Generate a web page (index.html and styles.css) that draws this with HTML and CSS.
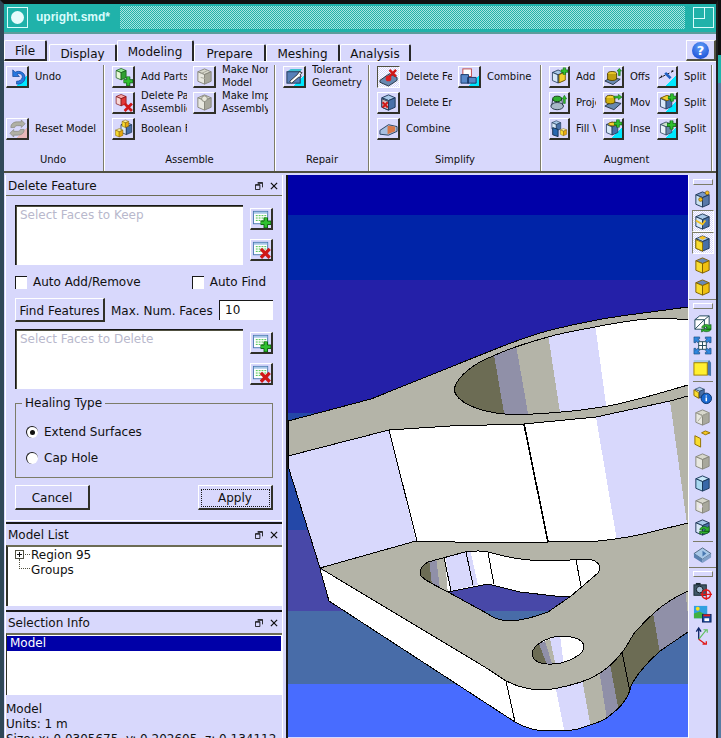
FILE: index.html
```html
<!DOCTYPE html>
<html lang="en">
<head>
  <meta charset="UTF-8" />
  <title>upright.smd*</title>
  <link rel="stylesheet" href="styles.css">
</head>
<body>

<!-- shared icon parts -->
<svg class="defs" width="0" height="0" aria-hidden="true">
  <symbol id="cube" viewBox="0 0 20 20">
    <g stroke="var(--s, #203858)" stroke-linejoin="round">
      <polygon points="10,2 17,5 10,8 3,5" fill="var(--t, #a8c8e8)"/>
      <polygon points="3,5 10,8 10,18 3,15" fill="var(--l, #d8e8f8)"/>
      <polygon points="17,5 10,8 10,18 17,15" fill="var(--r, #4870a8)"/>
    </g>
  </symbol>
  <symbol id="plus" viewBox="0 0 9 9">
    <path d="M3 0h3v3h3v3H6v3H3V6H0V3h3z" fill="#30c030" stroke="#086008" stroke-width=".8"/>
  </symbol>
  <symbol id="cross" viewBox="0 0 9 9">
    <path d="M1 1l7 7M8 1L1 8" stroke="#d01818" stroke-width="2.6"/>
  </symbol>
  <symbol id="sheet" viewBox="0 0 20 20">
    <rect x="1.5" y="2.5" width="15" height="13" fill="#fff" stroke="#4878b0"/>
    <rect x="2" y="3" width="14" height="2" fill="#a8c8e8"/>
    <path d="M4 7h11M4 9.500h11M4 12h11" stroke="#40c040" stroke-dasharray="2 1"/>
  </symbol>
</svg>

<div class="app">
  <div class="titlebar">
    <div class="title-icon"><span></span></div>
    <div class="title-text">upright.smd*</div>
    <div class="title-fill"></div>
    <div class="title-max"><span></span></div>
  </div>

  <div class="tabs">
    <div class="tab tab-file">File</div>
    <div class="tab tab-display">Display</div>
    <div class="tab tab-active">Modeling</div>
    <div class="tab tab-prepare">Prepare</div>
    <div class="tab tab-meshing">Meshing</div>
    <div class="tab tab-analysis">Analysis</div>
    <div class="help"><span>?</span></div>
  </div>

  <div class="ribbon">
    <div class="group group-undo">
      <div class="tools">
        <div class="tool">
          <div class="btn corner"><svg class="ic" viewBox="0 0 20 20"><path d="M5 3v7h7L9.500 7.500c3-1.500 6 .5 5.500 3.500-.5 2.500-3 4-6 4v3c5 .5 9-2.500 9-7 0-5-6-8-10.500-5.500z" fill="#2878e0" stroke="#0c3c90" stroke-width=".7"/></svg></div>
          <div class="label lw-undo">Undo</div>
        </div>
        <div class="tool row3">
          <div class="btn corner-pink"><svg class="ic" viewBox="0 0 20 20"><path d="M3 9c0-4 3-6 7-6h4V1l4 4-4 4V7h-4c-2 0-3 1-3 2zM17 11c0 4-3 6-7 6H6v2l-4-4 4-4v2h4c2 0 3-1 3-2z" fill="#b0b0a4" stroke="#84847c" stroke-width=".7"/></svg></div>
          <div class="label lw-reset">Reset Model</div>
        </div>
      </div>
      <div class="group-name">Undo</div>
    </div>

    <div class="group group-assemble">
      <div class="tools">
        <div class="tool">
          <div class="btn"><svg class="ic" viewBox="0 0 20 20"><use href="#cube" class="c-green" width="15" height="15" x="0" y="0"/><use href="#plus" x="10" y="10" width="10" height="10"/></svg></div>
          <div class="label lw-46">Add Parts</div>
        </div>
        <div class="tool">
          <div class="btn"><svg class="ic" viewBox="0 0 20 20"><use href="#cube" class="c-grey" width="20" height="20"/><path d="M6 7l7-3M6 11l8 2" stroke="#a8a89c"/></svg></div>
          <div class="label lw-46">Make Nor<br>Model</div>
        </div>
        <div class="tool">
          <div class="btn"><svg class="ic" viewBox="0 0 20 20"><use href="#cube" class="c-red" width="15" height="15" x="0" y="0"/><use href="#cross" x="10" y="10" width="10" height="10"/></svg></div>
          <div class="label lw-46">Delete Pa<br>Assemblie</div>
        </div>
        <div class="tool">
          <div class="btn"><svg class="ic" viewBox="0 0 20 20"><use href="#cube" class="c-grey" width="20" height="20"/><circle cx="10" cy="6" r="3" fill="#e8e8dc" stroke="#88887c"/></svg></div>
          <div class="label lw-46">Make Imp<br>Assembly</div>
        </div>
        <div class="tool">
          <div class="btn"><svg class="ic" viewBox="0 0 20 20"><use href="#cube" width="16" height="18" x="5" y="1"/><use href="#cube" class="c-yellow" width="10" height="10" x="7" y="0"/><use href="#cube" class="c-yellow" width="11" height="11" x="0" y="9"/></svg></div>
          <div class="label lw-46">Boolean F</div>
        </div>
      </div>
      <div class="group-name">Assemble</div>
    </div>

    <div class="group group-repair">
      <div class="tools">
        <div class="tool">
          <div class="btn corner"><svg class="ic" viewBox="0 0 20 20"><path d="M2 5l4-3h12l-2 3z" fill="#40c0d0"/><rect x="2" y="5" width="14" height="12" fill="#5880b8" stroke="#203858"/><path d="M5 15l8-7 2-3 3 1-2 2 1 2-3 1-7 6z" fill="#fff" stroke="#101010" stroke-width=".8"/></svg></div>
          <div class="label lw-repair">Tolerant<br>Geometry</div>
        </div>
      </div>
      <div class="group-name">Repair</div>
    </div>

    <div class="group group-simplify">
      <div class="tools">
        <div class="tool">
          <div class="btn pressed"><svg class="ic" viewBox="0 0 20 20"><path d="M1 13l10-7 8 4v3l-9 6-9-4z" fill="#6888b0" stroke="#203040"/><circle cx="10" cy="11" r="3" fill="#e02020"/><use href="#cross" x="10" y="1" width="9" height="9"/></svg></div>
          <div class="label lw-46">Delete Fe</div>
        </div>
        <div class="tool">
          <div class="btn corner"><svg class="ic" viewBox="0 0 20 20"><rect x="3" y="2" width="9" height="8" fill="#fff" stroke="#c04848"/><path d="M1 8h8v9H1zM8 11h9v6H8z" fill="#5888c8" stroke="#183868"/></svg></div>
          <div class="label lw-46">Combine</div>
        </div>
        <div class="tool">
          <div class="btn"><svg class="ic" viewBox="0 0 20 20"><use href="#cube" width="20" height="20"/><polygon points="3,6 10,9 10,18 3,15" fill="#d8b8b8" stroke="#203858"/><use href="#cross" x="3" y="9" width="7" height="7"/></svg></div>
          <div class="label lw-46">Delete Er</div>
        </div>
        <div class="tool empty"></div>
        <div class="tool">
          <div class="btn"><svg class="ic" viewBox="0 0 20 20"><path d="M1 12l9-6 9 2v5l-9 4-9-1z" fill="#a8c0e0" stroke="#284060"/><path d="M9 7l8 1v5l-8 3z" fill="#d87848"/></svg></div>
          <div class="label lw-46">Combine</div>
        </div>
      </div>
      <div class="group-name">Simplify</div>
    </div>

    <div class="group group-augment">
      <div class="tools">
        <div class="tool">
          <div class="btn"><svg class="ic" viewBox="0 0 20 20"><use href="#cube" width="18" height="20" y="0"/><polygon points="10,8 17,5 17,14 10,17" fill="#f0d030" stroke="#806000"/><use href="#plus" x="12" y="0" width="8" height="8"/></svg></div>
          <div class="label lw-20">Add</div>
        </div>
        <div class="tool">
          <div class="btn"><svg class="ic" viewBox="0 0 20 20"><path d="M1 15l7-4 10 2-8 6z" fill="#6888b0" stroke="#203040"/><ellipse cx="9" cy="7" rx="5" ry="2.500" fill="#f0d030" stroke="#504000"/><path d="M4 7v6c2 2 8 2 10 0V7" fill="#c0a010" stroke="#504000"/><path d="M16 9V4h-1.500l2.500-3 2.500 3H18v5z" fill="#30c030" stroke="#086008" stroke-width=".6"/></svg></div>
          <div class="label lw-20">Offs</div>
        </div>
        <div class="tool">
          <div class="btn corner"><svg class="ic" viewBox="0 0 20 20"><path d="M1 12L19 3" stroke="#101010" stroke-dasharray="3 2"/><circle cx="4" cy="10" r="1" fill="#101010"/><circle cx="16" cy="4" r="1" fill="#101010"/><path d="M8 6l6 6" stroke="#2060c0" stroke-width="3"/></svg></div>
          <div class="label lw-22">Split</div>
        </div>
        <div class="tool">
          <div class="btn"><svg class="ic" viewBox="0 0 20 20"><ellipse cx="8" cy="14" rx="7" ry="4" fill="#a8b8c8" stroke="#203040"/><ellipse cx="8" cy="6" rx="5" ry="3" fill="#30b030" stroke="#083808"/><path d="M3 6l-1 7M13 6l1 7" stroke="#203040"/><path d="M15 11V6h-1.500L16 2l2.500 4H17v5z" fill="#30c030" stroke="#086008" stroke-width=".6"/></svg></div>
          <div class="label lw-20">Proje</div>
        </div>
        <div class="tool">
          <div class="btn"><svg class="ic" viewBox="0 0 20 20"><path d="M1 14l8-5 10 2-8 7z" fill="#6888b0" stroke="#203040"/><ellipse cx="7" cy="5" rx="5" ry="3" fill="#f0d030" stroke="#504000"/><path d="M2 5v5c2 2 8 2 10 0V5" fill="#d0b010" stroke="#504000"/><path d="M11 3h5V1l4 3-4 3V5h-5z" fill="#30c030" stroke="#086008" stroke-width=".6"/></svg></div>
          <div class="label lw-20">Mov</div>
        </div>
        <div class="tool">
          <div class="btn corner"><svg class="ic" viewBox="0 0 20 20"><use href="#cube" width="18" height="20"/><polygon points="10,2 17,5 10,8 3,5" fill="#f0d030" stroke="#806000"/><use href="#plus" x="11" y="0" width="9" height="9"/></svg></div>
          <div class="label lw-22">Split</div>
        </div>
        <div class="tool">
          <div class="btn"><svg class="ic" viewBox="0 0 20 20"><use href="#cube" width="14" height="14" x="0"/><path d="M3 9v8l6 2V11z" fill="#2868b0" stroke="#102848"/><use href="#cube" class="c-yellow" width="10" height="10" x="10" y="9"/></svg></div>
          <div class="label lw-20">Fill V</div>
        </div>
        <div class="tool">
          <div class="btn corner"><svg class="ic" viewBox="0 0 20 20"><use href="#cube" width="18" height="20"/><ellipse cx="10" cy="5" rx="5" ry="2" fill="#f0d030" stroke="#806000"/><use href="#plus" x="11" y="0" width="9" height="9"/></svg></div>
          <div class="label lw-20">Inse</div>
        </div>
        <div class="tool">
          <div class="btn corner"><svg class="ic" viewBox="0 0 20 20"><use href="#cube" class="c-pale" width="18" height="20"/><use href="#plus" x="10" y="1" width="10" height="10"/></svg></div>
          <div class="label lw-22">Split</div>
        </div>
      </div>
      <div class="group-name">Augment</div>
    </div>
  </div>

  <div class="main">
    <div class="dock">
      <div class="panel panel-feature">
        <div class="panel-head rule">
          <span>Delete Feature</span>
          <span class="head-btns"><svg class="head-ic" viewBox="0 0 9 9"><path d="M3 .500h5.500V6M.500 3h5v5.500h-5zM.500 3.500h5M3 1.500h5" fill="none" stroke="#101010"/></svg><svg class="head-ic" viewBox="0 0 9 9"><path d="M1 1l7 7M8 1L1 8" stroke="#101010" stroke-width="1.400"/></svg></span>
        </div>
        <div class="panel-body">
          <div class="select-row">
            <div class="listbox"><span class="hint">Select Faces to Keep</span></div>
            <div class="side-btns">
              <div class="btn btn-side"><svg class="ic" viewBox="0 0 20 20"><use href="#sheet"/><use href="#plus" x="9" y="9" width="11" height="11"/></svg></div>
              <div class="btn btn-side"><svg class="ic" viewBox="0 0 20 20"><use href="#sheet"/><use href="#cross" x="8" y="8" width="12" height="12"/></svg></div>
            </div>
          </div>
          <div class="checks">
            <label class="check"><span class="box"></span>Auto Add/Remove</label>
            <label class="check"><span class="box"></span>Auto Find</label>
          </div>
          <div class="find-row">
            <div class="push find-btn">Find Features</div>
            <span class="find-label">Max. Num. Faces</span>
            <div class="num-input">10</div>
          </div>
          <div class="select-row select-row-2">
            <div class="listbox"><span class="hint">Select Faces to Delete</span></div>
            <div class="side-btns">
              <div class="btn btn-side"><svg class="ic" viewBox="0 0 20 20"><use href="#sheet"/><use href="#plus" x="9" y="9" width="11" height="11"/></svg></div>
              <div class="btn btn-side"><svg class="ic" viewBox="0 0 20 20"><use href="#sheet"/><use href="#cross" x="8" y="8" width="12" height="12"/></svg></div>
            </div>
          </div>
          <fieldset class="healing">
            <legend>Healing Type</legend>
            <div class="radio"><span class="dot on"></span>Extend Surfaces</div>
            <div class="radio"><span class="dot"></span>Cap Hole</div>
          </fieldset>
          <div class="actions">
            <div class="push action-btn">Cancel</div>
            <div class="push action-btn"><span class="focus">Apply</span></div>
          </div>
        </div>
      </div>

      <div class="panel panel-model">
        <div class="panel-head head-low">
          <span>Model List</span>
          <span class="head-btns"><svg class="head-ic" viewBox="0 0 9 9"><path d="M3 .500h5.500V6M.500 3h5v5.500h-5zM.500 3.500h5M3 1.500h5" fill="none" stroke="#101010"/></svg><svg class="head-ic" viewBox="0 0 9 9"><path d="M1 1l7 7M8 1L1 8" stroke="#101010" stroke-width="1.400"/></svg></span>
        </div>
        <div class="tree">
          <div class="tree-row"><span class="plus-box"></span><span class="twig"></span>Region 95</div>
          <div class="tree-row"><span class="elbow"></span>Groups</div>
        </div>
      </div>

      <div class="panel panel-info">
        <div class="panel-head head-low">
          <span>Selection Info</span>
          <span class="head-btns"><svg class="head-ic" viewBox="0 0 9 9"><path d="M3 .500h5.500V6M.500 3h5v5.500h-5zM.500 3.500h5M3 1.500h5" fill="none" stroke="#101010"/></svg><svg class="head-ic" viewBox="0 0 9 9"><path d="M1 1l7 7M8 1L1 8" stroke="#101010" stroke-width="1.400"/></svg></span>
        </div>
        <div class="sel-list"><div class="sel-row">Model</div></div>
        <div class="info">Model<br>Units: 1 m<br>Size: x: 0.0305675, y: 0.202605, z: 0.134112</div>
      </div>
    </div>

    <div class="viewport">
      <svg class="scene" viewBox="288 176 400 562" shape-rendering="crispEdges">
        <defs>
          <clipPath id="bigHole"><path d="M454 390C458 376 475 364 493 357C510 349 530 343 548 338C565 333 580 331 595 328C620 323 645 319 666 319L688 321V386C660 394 635 402 608 407C590 410 575 412 561 413C540 415 520 416 505 415C480 413 456 404 454 390Z"/></clipPath>
          <clipPath id="smallHole"><path d="M532 655C533 645 548 638 561 637C572 637 584 640 584 648C584 655 572 661 561 664C545 667 533 664 532 655Z"/></clipPath>
          <clipPath id="triHole"><path d="M420 575C420 569 424 565 428 563L465 553C472 552 480 551 488 553C500 556 510 559 521 560C535 562 545 562 555 562L585 560C592 560 598 562 600 568C600 571 600 572 598 574L571 597L548 613C535 618 525 621 510 622C503 622 495 620 488 615L448 593C435 586 421 580 420 575Z"/></clipPath>
          <clipPath id="lowerWall"><path d="M320 570L329 602L515 723C525 729 535 732 548 732C560 732 570 732 578 730C590 726 598 724 605 720C615 713 628 703 631 687C634 680 645 665 660 652L688 633V590L600 600L330 575Z"/></clipPath>
        </defs>

        <!-- background colour bands -->
        <rect x="288" y="176" width="400" height="40" fill="#0000a8"/>
        <rect x="288" y="216" width="400" height="65" fill="#0024a8"/>
        <rect x="288" y="281" width="400" height="133" fill="#2420a8"/>
        <rect x="288" y="414" width="400" height="117" fill="#2448a8"/>
        <rect x="288" y="531" width="400" height="81" fill="#4848a8"/>
        <rect x="288" y="612" width="400" height="73" fill="#486ca8"/>
        <rect x="288" y="685" width="400" height="53" fill="#486cff"/>

        <!-- upper plate -->
        <path d="M288 422L371 400L488 353C510 344 530 336 555 330C580 324 600 320 621 317L688 308V405L670 407L596 423L524 430L389 436L288 460Z" fill="#b4b4a8" stroke="#000"/>
        <g clip-path="url(#bigHole)">
          <rect x="450" y="315" width="240" height="105" fill="#fff"/>
          <polygon points="450,350 493,350 505,420 450,420" fill="#6c6c54"/>
          <polygon points="493,350 516,346 529,420 505,420" fill="#9090a8"/>
          <polygon points="516,346 548,335 561,420 529,420" fill="#b4b4a8"/>
          <polygon points="548,335 595,325 608,420 561,420" fill="#d8d8fc"/>
        </g>
        <path d="M688 321L666 319C645 319 620 323 595 328C580 331 565 333 548 338C530 343 510 349 493 357C475 364 458 376 454 390C456 404 480 413 505 415C520 416 540 415 561 413C575 412 590 410 608 407C635 402 660 394 688 386" fill="none" stroke="#000"/>

        <!-- upper walls -->
        <polygon points="288,457 389,431 417,542 320,569 288,467" fill="#d8d8fc" stroke="#000"/>
        <polygon points="389,431 450,427 524,425 596,418 670,402 688,397 688,535 616,548 580,548 548,548 510,548 417,546" fill="#fff"/>
        <polygon points="596,418 670,402 688,532 618,548" fill="#d8d8fc"/>
        <polygon points="670,402 688,397 688,532" fill="#b4b4a8"/>
        <path d="M389 431L450 427 524 425 596 418 670 402 688 397" fill="none" stroke="#000"/>
        <path d="M389 431L417 542" stroke="#000"/>
        <path d="M524 425L548 543" stroke="#000" stroke-width="1.600"/>

        <!-- lower wall -->
        <g clip-path="url(#lowerWall)">
          <rect x="318" y="565" width="372" height="175" fill="#fff"/>
          <polygon points="554,680 582,680 593,740 566,740" fill="#d8d8fc"/>
          <polygon points="582,680 599,670 610,740 593,740" fill="#b4b4a8"/>
          <polygon points="599,670 609,660 624,740 610,740" fill="#9090a8"/>
          <polygon points="609,660 619,640 639,740 624,740" fill="#6c6c54"/>
          <polygon points="619,640 653,614 675,740 639,740" fill="#6c6c54"/>
          <polygon points="653,614 685,590 710,700 675,740" fill="#9090a8"/>
          <polygon points="685,590 690,590 690,625 688,616" fill="#b4b4a8"/>
        </g>
        <path d="M320 570L329 602L515 723C525 729 535 732 548 732C560 732 570 732 578 730C590 726 598 724 605 720C615 713 628 703 631 687C634 680 645 665 660 652L688 633" fill="none" stroke="#000"/>
        <path d="M506 682L515 723M622 653L630 693" stroke="#000"/>

        <!-- lower plate -->
        <path d="M320 569L416 542C430 542 440 543 455 543L548 543C570 543 585 543 598 542C620 540 640 536 655 532L688 524V592C675 598 665 604 655 613C645 622 640 628 635 633C630 640 628 646 623 652C618 658 614 664 608 668C600 675 590 680 581 683C565 688 552 691 541 691C532 691 525 689 518 687L506 682L488 670Z" fill="#b4b4a8" stroke="#000"/>

        <!-- triangular cut-out -->
        <g clip-path="url(#triHole)">
          <rect x="415" y="548" width="190" height="80" fill="#fff"/>
          <polygon points="418,550 428,550 432,585 418,585" fill="#6c6c54"/>
          <polygon points="428,550 435,550 440,590 432,586" fill="#9090a8"/>
          <polygon points="435,550 444,550 448,595 440,590" fill="#b4b4a8"/>
          <polygon points="444,550 465,550 472,587 451,592" fill="#d8d8fc"/>
          <polygon points="465,550 470,550 478,586 472,587" fill="#d8d8fc"/>
          <polygon points="448,593 488,585 520,593 555,597 573,597 548,613 530,625 500,625" fill="#4848a8"/>
          <rect x="480" y="612" width="80" height="14" fill="#486ca8"/>
          <path d="M444 558L451 592M466 553L473 586M488 554L494 585M576 561L581 587" stroke="#000"/>
          <path d="M448 593L488 585L520 593L555 597H573" fill="none" stroke="#000"/>
        </g>
        <path d="M420 575C420 569 424 565 428 563L465 553C472 552 480 551 488 553C500 556 510 559 521 560C535 562 545 562 555 562L585 560C592 560 598 562 600 568C600 571 600 572 598 574L571 597L548 613C535 618 525 621 510 622C503 622 495 620 488 615L448 593C435 586 421 580 420 575Z" fill="none" stroke="#000"/>

        <!-- small round hole -->
        <g clip-path="url(#smallHole)">
          <rect x="530" y="635" width="56" height="34" fill="#fff"/>
          <polygon points="530,645 539,645 548,668 530,668" fill="#6c6c54"/>
          <polygon points="539,645 545,642 553,668 548,668" fill="#9090a8"/>
          <polygon points="545,642 550,640 556,668 553,668" fill="#b4b4a8"/>
          <polygon points="550,640 560,636 564,668 556,668" fill="#d8d8fc"/>
          <polygon points="580,640 586,640 586,652" fill="#d8d8fc"/>
        </g>
        <path d="M532 655C533 645 548 638 561 637C572 637 584 640 584 648C584 655 572 661 561 664C545 667 533 664 532 655Z" fill="none" stroke="#000"/>
      </svg>
    </div>

    <div class="toolbar">
      <div class="grip"></div>
      <div class="tb-ic"><svg viewBox="0 0 20 20" class="c-blue"><use href="#cube"/><circle cx="15" cy="3" r="2" fill="#f0c020" stroke="#805000" stroke-width=".6"/><circle cx="8" cy="10" r="2" fill="#f0c020" stroke="#805000" stroke-width=".6"/></svg></div>
      <div class="tb-ic tb-on"><svg viewBox="0 0 20 20"><use href="#cube"/><path d="M3 9l7 4 3-4" fill="none" stroke="#f0c020" stroke-width="2"/></svg></div>
      <div class="tb-ic tb-on"><svg viewBox="0 0 20 20"><use href="#cube"/><polygon points="3,6 10,9 10,18 3,15" fill="#f8dc30" stroke="#907000"/><polygon points="10,2 14,4 10,6 6,4" fill="#f8c020"/></svg></div>
      <div class="tb-ic"><svg viewBox="0 0 20 20" class="c-gold"><use href="#cube"/></svg></div>
      <div class="tb-ic"><svg viewBox="0 0 20 20" class="c-gold"><use href="#cube"/></svg></div>
      <div class="tb-sep tb-sep-full"></div>
      <div class="grip"></div>
      <div class="tb-ic"><svg viewBox="0 0 20 20"><path d="M2 6l5-4h10v10l-5 4H2z" fill="#fff" stroke="#204858"/><path d="M2 6h10v10M12 6l5-4M2 16L12 6" fill="none" stroke="#204858"/><path d="M9 14c1-3 6-4 8-2l2-1v5h-5l1-2c-1-1-3-1-4 1zM19 16c-1 3-6 3-8 2l-2 1v-3z" fill="#30b030" stroke="#085008" stroke-width=".6"/></svg></div>
      <div class="tb-ic"><svg viewBox="0 0 20 20"><rect x="6" y="6" width="8" height="8" fill="#fff" stroke="#204858"/><path d="M6 10h8M10 6v8" stroke="#204858"/><g fill="#3088e0" stroke="#104070" stroke-width=".6"><path d="M1 1h6v2H5l2 2-2 2-2-2v2H1zM19 1v6h-2V5l-2 2-2-2 2-2h-2V1zM1 19v-6h2v2l2-2 2 2-2 2h2v2zM19 19h-6v-2h2l-2-2 2-2 2 2v-2h2z"/></g></svg></div>
      <div class="tb-ic"><svg viewBox="0 0 20 20"><path d="M1 2h16l2 3v14l-4-1H1z" fill="#4878b0"/><path d="M1 2h16l-2 3H1z" fill="#a8c8e8"/><rect x="1" y="5" width="14" height="13" fill="#fff030" stroke="#a08000"/></svg></div>
      <div class="tb-sep"></div>
      <div class="tb-ic"><svg viewBox="0 0 20 20"><use href="#cube" width="14" height="14"/><polygon points="1,4 6,7 6,13 1,10" fill="#f8dc30" stroke="#907000"/><circle cx="14" cy="13" r="5.500" fill="#1868d0" stroke="#083068"/><path d="M14 10v1M14 12v4" stroke="#fff" stroke-width="1.600"/></svg></div>
      <div class="tb-ic"><svg viewBox="0 0 20 20" class="c-grey"><use href="#cube"/><path d="M3 5l7 3 7-3M10 8l-5 6M10 8l5 6" stroke="#a8a89c" fill="none"/></svg></div>
      <div class="tb-ic"><svg viewBox="0 0 20 20"><polygon points="13,1 18,3 13,5 9,3" fill="#f8c820" stroke="#907000"/><polygon points="2,6 8,9 8,18 2,15" fill="#f8dc30" stroke="#907000"/></svg></div>
      <div class="tb-ic"><svg viewBox="0 0 20 20" class="c-grey"><use href="#cube"/></svg></div>
      <div class="tb-ic"><svg viewBox="0 0 20 20"><use href="#cube" class="c-sky"/></svg></div>
      <div class="tb-ic"><svg viewBox="0 0 20 20" class="c-grey"><use href="#cube"/><circle cx="8" cy="11" r="2" fill="#f0e8f8"/></svg></div>
      <div class="tb-ic"><svg viewBox="0 0 20 20"><use href="#cube"/><path d="M7 12c1-3 6-4 8-2l2-1v5h-5l1-2c-1-1-3-1-4 1zM17 14c-1 3-6 3-8 2l-2 1v-3z" fill="#30b030" stroke="#085008" stroke-width=".6"/></svg></div>
      <div class="tb-sep"></div>
      <div class="tb-ic"><svg viewBox="0 0 20 20"><polygon points="10,2 19,8 10,14 1,8" fill="#a8c8e8" stroke="#506880"/><polygon points="1,8 10,14 10,18 1,12" fill="#5880b0"/><polygon points="19,8 10,14 10,18 19,12" fill="#80a0c8"/><polygon points="10,5 14,8 10,11" fill="#4878b0"/></svg></div>
      <div class="tb-sep tb-sep-full"></div>
      <div class="grip"></div>
      <div class="tb-ic"><svg viewBox="0 0 20 20"><rect x="1" y="3" width="13" height="11" fill="#405868" stroke="#182830"/><circle cx="7" cy="8" r="3.500" fill="#a8c0d8" stroke="#101820"/><rect x="3" y="1" width="5" height="2" fill="#182830"/><circle cx="14" cy="13" r="4.500" fill="none" stroke="#e01818" stroke-width="1.600"/><path d="M14 7v12M8 13h12" stroke="#e01818" stroke-width="1.200"/></svg></div>
      <div class="tb-ic"><svg viewBox="0 0 20 20"><rect x="1" y="2" width="14" height="13" fill="#30a0e0"/><path d="M1 10l6-2 8 4v3H1z" fill="#40b040"/><circle cx="5" cy="5" r="2" fill="#f8e020"/><rect x="10" y="11" width="9" height="8" fill="#1848a0" stroke="#0c2860"/><rect x="11" y="11" width="7" height="2" fill="#e02020"/><rect x="12" y="15" width="5" height="3" fill="#fff"/></svg></div>
      <div class="tb-ic"><svg viewBox="0 0 20 20"><path d="M6 14V3M3.500 6L6 2l2.500 4" fill="none" stroke="#102868" stroke-width="1.400"/><path d="M6 14L14 4M11 4h4v3" fill="none" stroke="#60c060" stroke-width="1.200"/><path d="M6 14l7 5M10 19h4v-3" fill="none" stroke="#e01818" stroke-width="1.400"/></svg></div>
    </div>
  </div>
</div>

</body>
</html>
```

FILE: styles.css
```css
* {
  box-sizing: border-box;
}

html, body {
  margin: 0;
  padding: 0;
  height: 100%;
  overflow: hidden;
}

body {
  background: linear-gradient(#101010 0 55px, #20b2aa 55px 83px, #587ca4 83px);
  font-family: "DejaVu Sans", sans-serif;
  font-size: 12px;
  color: #101010;
}

.defs {
  position: absolute;
}

/* cube colours, picked up by the shared symbol */
.c-green { --t: #90e890; --l: #e8f8d8; --r: #30a030; --s: #105810; }
.c-red { --t: #f8a8a8; --l: #f8d8d8; --r: #e03838; --s: #801010; }
.c-yellow { --t: #f8f0a0; --l: #f8dc30; --r: #e8a810; --s: #806000; }
.c-grey { --t: #d8d8cc; --l: #e8e8e0; --r: #a8a89c; --s: #88887c; }
.c-pale { --t: #c8e0c8; --l: #e8f0f8; --r: #6888a8; --s: #304860; }
.c-blue { --t: #7898c8; --l: #c8e0f0; --r: #5878a8; --s: #203858; }
.c-gold { --t: #6888b8; --l: #f8dc30; --r: #f0c010; --s: #806000; }
.c-sky { --t: #c8e8f8; --l: #a8d8f0; --r: #3868a8; --s: #183858; }

.app {
  width: 718px;
  height: 738px;
  background: #d8d8fc;
  border-top: 4px solid #101010;
  border-left: 4px solid #304858;
  border-right: 2px solid #202020;
  display: flex;
  flex-direction: column;
}

/* title bar */
.titlebar {
  height: 30px;
  flex: none;
  display: flex;
  align-items: center;
  background: #20b2aa;
  border-bottom: 2px solid #5c9c9c;
  padding: 0 2px 2px 3px;
}

.title-icon {
  width: 21px;
  height: 21px;
  flex: none;
  border: 1px solid #d8fcfc;
  display: flex;
  align-items: center;
  justify-content: center;
}

.title-icon span {
  width: 13px;
  height: 13px;
  border-radius: 50%;
  background: #e8fcfc;
}

.title-text {
  width: 92px;
  flex: none;
  padding-left: 8px;
  font-family: "Liberation Sans", sans-serif;
  font-weight: bold;
  font-size: 12px;
  color: #d8fcfc;
}

.title-fill {
  width: 565px;
  flex: none;
  height: 23px;
  background-color: #20b2aa;
  background-image: repeating-conic-gradient(#a8e4e0 0 25%, #20b2aa 0 50%);
  background-size: 2px 2px;
}

.title-max {
  width: 21px;
  height: 21px;
  flex: none;
  margin-left: 8px;
  border: 1px solid #d8fcfc;
}

.title-max span {
  display: block;
  width: 11px;
  height: 11px;
  border-right: 1px solid #d8fcfc;
  border-bottom: 1px solid #d8fcfc;
}

/* tabs */
.tabs {
  height: 28px;
  flex: none;
  display: flex;
  align-items: flex-end;
  border-bottom: 1px solid #fff;
}

.tab {
  height: 17px;
  display: flex;
  align-items: center;
  justify-content: center;
  padding-top: 1px;
  border-top: 1px solid #fff;
  border-left: 1px solid #fff;
  border-right: 2px solid #282828;
  border-top-left-radius: 2px;
  border-top-right-radius: 2px;
}

.tab-file {
  width: 43px;
  height: 21px;
  border-bottom: 2px solid #282828;
  margin-right: 2px;
}

.tab-display { width: 68px; }
.tab-active { width: 77px; height: 21px; }
.tab-prepare { width: 72px; }
.tab-meshing { width: 74px; }
.tab-analysis { width: 71px; }

.help {
  margin-left: auto;
  width: 30px;
  height: 21px;
  border-top: 1px solid #fff;
  border-left: 1px solid #fff;
  border-right: 2px solid #505040;
  border-bottom: 2px solid #505040;
  display: flex;
  align-items: center;
  justify-content: center;
}

.help span {
  width: 17px;
  height: 17px;
  border-radius: 50%;
  background: radial-gradient(circle at 50% 30%, #60a0f8, #1040d0);
  color: #fff;
  font-weight: bold;
  font-size: 13px;
  line-height: 17px;
  text-align: center;
}

/* ribbon */
.ribbon {
  height: 111px;
  flex: none;
  display: flex;
  border-bottom: 2px solid #505040;
  font-size: 10px;
  padding-top: 3px;
}

.group {
  display: flex;
  flex-direction: column;
  border-right: 1px solid #7c7c68;
  box-shadow: 1px 0 0 #fff;
  margin-right: 1px;
  padding-top: 1px;
}

.group-undo { width: 100px; padding-left: 2px; }
.group-assemble { width: 170px; padding-left: 7px; }
.group-repair { width: 93px; padding-left: 7px; }
.group-simplify { width: 171px; padding-left: 7px; }
.group-augment { width: 170px; padding-left: 7px; }

.tools {
  display: grid;
  grid-template-rows: repeat(3, 22px);
  row-gap: 4px;
  column-gap: 6px;
  align-items: center;
  justify-content: start;
}

.group-assemble .tools,
.group-simplify .tools {
  grid-template-columns: auto auto;
}

.group-augment .tools {
  grid-template-columns: auto auto auto;
  column-gap: 7px;
}

.group-augment .btn {
  width: 21px;
}

.tool {
  display: flex;
  align-items: center;
  min-height: 22px;
}

.row3 {
  grid-row: 3;
}

.group-name {
  margin-top: auto;
  height: 17px;
  text-align: center;
  padding-right: 7px;
}

.group-undo .group-name {
  padding-right: 3px;
}

.btn {
  width: 23px;
  height: 22px;
  flex: none;
  display: flex;
  align-items: center;
  justify-content: center;
  border-top: 1px solid #fff;
  border-left: 1px solid #fff;
  border-right: 2px solid #303028;
  border-bottom: 2px solid #303028;
}

.corner {
  background: linear-gradient(135deg, transparent 72%, #00e8ff 72%);
}

.corner-pink {
  background: linear-gradient(135deg, transparent 72%, #e8b8b8 72%);
}

.pressed {
  border-color: #505040 #fff #fff #505040;
  border-width: 1px;
  background-color: #fff;
  background-image: repeating-conic-gradient(#d8d8fc 0 25%, #fff 0 50%);
  background-size: 2px 2px;
}

.ic {
  width: 19px;
  height: 19px;
  display: block;
}

.label {
  margin-left: 6px;
  padding-bottom: 2px;
  line-height: 13px;
  overflow: hidden;
  white-space: nowrap;
}

.lw-undo { width: 40px; }
.lw-reset { width: 68px; }
.lw-46 { width: 46px; }
.lw-repair { width: 52px; }
.lw-20 { width: 20px; }
.lw-22 { width: 24px; }

/* docks on the left */
.main {
  flex: 1;
  min-height: 0;
  display: flex;
  padding-top: 2px;
}

.dock {
  width: 278px;
  flex: none;
  margin: 0 3px 0 1px;
  border-left: 1px solid #fff;
  border-right: 1px solid #fff;
  display: flex;
  flex-direction: column;
  overflow: hidden;
}

.panel {
  flex: none;
}

.panel-head {
  height: 20px;
  display: flex;
  align-items: center;
  justify-content: space-between;
  padding: 1px 4px 0 2px;
}

.head-low {
  height: 21px;
  padding-bottom: 1px;
}

.rule {
  height: 21px;
  border-bottom: 1px solid #6c6c54;
}

.head-btns {
  display: flex;
  gap: 7px;
}

.head-ic {
  width: 8px;
  height: 8px;
  display: block;
}

.panel-feature {
  height: 346px;
  border-bottom: 1px solid #fff;
}

.panel-body {
  padding: 9px 9px 0 9px;
}

.select-row {
  display: flex;
  height: 60px;
}

.select-row-2 {
  margin-top: 7px;
}

.listbox {
  width: 228px;
  height: 60px;
  background: #fff;
  border-top: 1px solid #181818;
  border-left: 1px solid #181818;
  box-shadow: inset 1px 1px 0 #505040;
  padding: 2px 4px;
}

.hint {
  color: #b8b8cc;
  line-height: 14px;
}

.side-btns {
  margin-left: 7px;
  padding-top: 3px;
  display: flex;
  flex-direction: column;
  gap: 9px;
}

.btn-side {
  width: 23px;
  height: 22px;
}

.checks {
  display: flex;
  justify-content: space-between;
  margin-top: 10px;
  padding-right: 7px;
  height: 14px;
}

.check {
  display: flex;
  align-items: center;
  gap: 6px;
}

.box {
  width: 12px;
  height: 13px;
  background: #fff;
  border-top: 1px solid #181818;
  border-left: 1px solid #181818;
}

.find-row {
  display: flex;
  align-items: center;
  margin-top: 9px;
  height: 24px;
}

.push {
  display: flex;
  align-items: center;
  justify-content: center;
  padding-top: 1px;
  border-top: 1px solid #fff;
  border-left: 1px solid #fff;
  border-right: 2px solid #303028;
  border-bottom: 2px solid #303028;
}

.find-btn {
  width: 90px;
  height: 24px;
  padding-top: 2px;
}

.find-label {
  margin: 2px 0 0 6px;
  width: 108px;
}

.num-input {
  width: 54px;
  height: 20px;
  background: #fff;
  border-top: 1px solid #181818;
  border-left: 1px solid #181818;
  padding-left: 5px;
  line-height: 18px;
}

.healing {
  margin: 7px 0 0 0;
  padding: 15px 0 0 10px;
  width: 258px;
  height: 82px;
  border: 1px solid #7c7c68;
  min-inline-size: 0;
}

.healing legend {
  margin-left: -4px;
  padding: 0 3px;
  line-height: 14px;
}

.radio {
  display: flex;
  align-items: center;
  gap: 6px;
  height: 14px;
  margin-bottom: 12px;
}

.dot {
  width: 12px;
  height: 12px;
  border-radius: 50%;
  background: #fff;
  border-top: 1px solid #181818;
  border-left: 1px solid #181818;
  display: flex;
  align-items: center;
  justify-content: center;
}

.dot.on::after {
  content: "";
  width: 5px;
  height: 5px;
  border-radius: 50%;
  background: #101010;
}

.actions {
  display: flex;
  justify-content: space-between;
  margin-top: 7px;
}

.action-btn {
  width: 75px;
  height: 25px;
}

.focus {
  width: 69px;
  height: 18px;
  display: flex;
  align-items: center;
  justify-content: center;
  border: 1px dotted #181818;
}

.panel-model {
  border-top: 2px solid #181818;
  margin-top: 1px;
  border-bottom: 2px solid #181818;
  height: 90px;
}

.tree {
  height: 61px;
  background: #fff;
  border-top: 2px solid #6c6c54;
  border-left: 2px solid #303028;
  margin-bottom: 5px;
}

.tree-row {
  height: 15px;
  display: flex;
  align-items: center;
  position: relative;
  padding-left: 23px;
}

.plus-box {
  position: absolute;
  left: 7px;
  top: 3px;
  width: 9px;
  height: 9px;
  border: 1px solid #505040;
  background: linear-gradient(#101010, #101010) center / 5px 1px no-repeat,
    linear-gradient(#101010, #101010) center / 1px 5px no-repeat;
}

.twig {
  position: absolute;
  left: 17px;
  top: 7px;
  width: 5px;
  border-top: 1px dotted #505040;
}

.elbow {
  position: absolute;
  left: 11px;
  top: -3px;
  width: 11px;
  height: 10px;
  border-left: 1px dotted #505040;
  border-bottom: 1px dotted #505040;
}

.panel-info {
  flex: 1;
}

.sel-list {
  height: 62px;
  background: #fff;
  border-top: 2px solid #6c6c54;
  border-left: 1px solid #303028;
  padding: 1px 1px 0 0;
}

.sel-row {
  height: 15px;
  background: #0000a8;
  color: #fff;
  padding-left: 3px;
  line-height: 15px;
}

.info {
  margin-top: 7px;
  line-height: 15px;
  white-space: nowrap;
}

/* 3d view, the drawing is the content */
.viewport {
  width: 402px;
  flex: none;
  border-left: 2px solid #181818;
  overflow: hidden;
}

.scene {
  display: block;
  width: 400px;
  height: 562px;
}

/* right toolbar */
.toolbar {
  flex: 1;
  border-left: 1px solid #fff;
  display: flex;
  flex-direction: column;
  align-items: center;
  padding-top: 4px;
}

.grip {
  width: 20px;
  height: 6px;
  flex: none;
  border: 1px solid #7c7c68;
  border-left-color: #fff;
  border-top-color: #fff;
  margin-bottom: 3px;
}

.tb-ic {
  width: 22px;
  height: 22px;
  flex: none;
  display: flex;
  align-items: center;
  justify-content: center;
}

.tb-ic svg {
  width: 19px;
  height: 19px;
  display: block;
}

.tb-on {
  border: 1px solid #7c7c68;
  border-right-color: #fff;
  border-bottom-color: #fff;
  background-color: #fff;
  background-image: repeating-conic-gradient(#d8d8fc 0 25%, #fff 0 50%);
  background-size: 2px 2px;
}

.tb-sep {
  width: 20px;
  height: 1px;
  flex: none;
  margin: 3px 0 2px;
  background: #7c7c68;
}

.tb-sep-full {
  width: 100%;
  margin: 1px 0 3px;
}
```
